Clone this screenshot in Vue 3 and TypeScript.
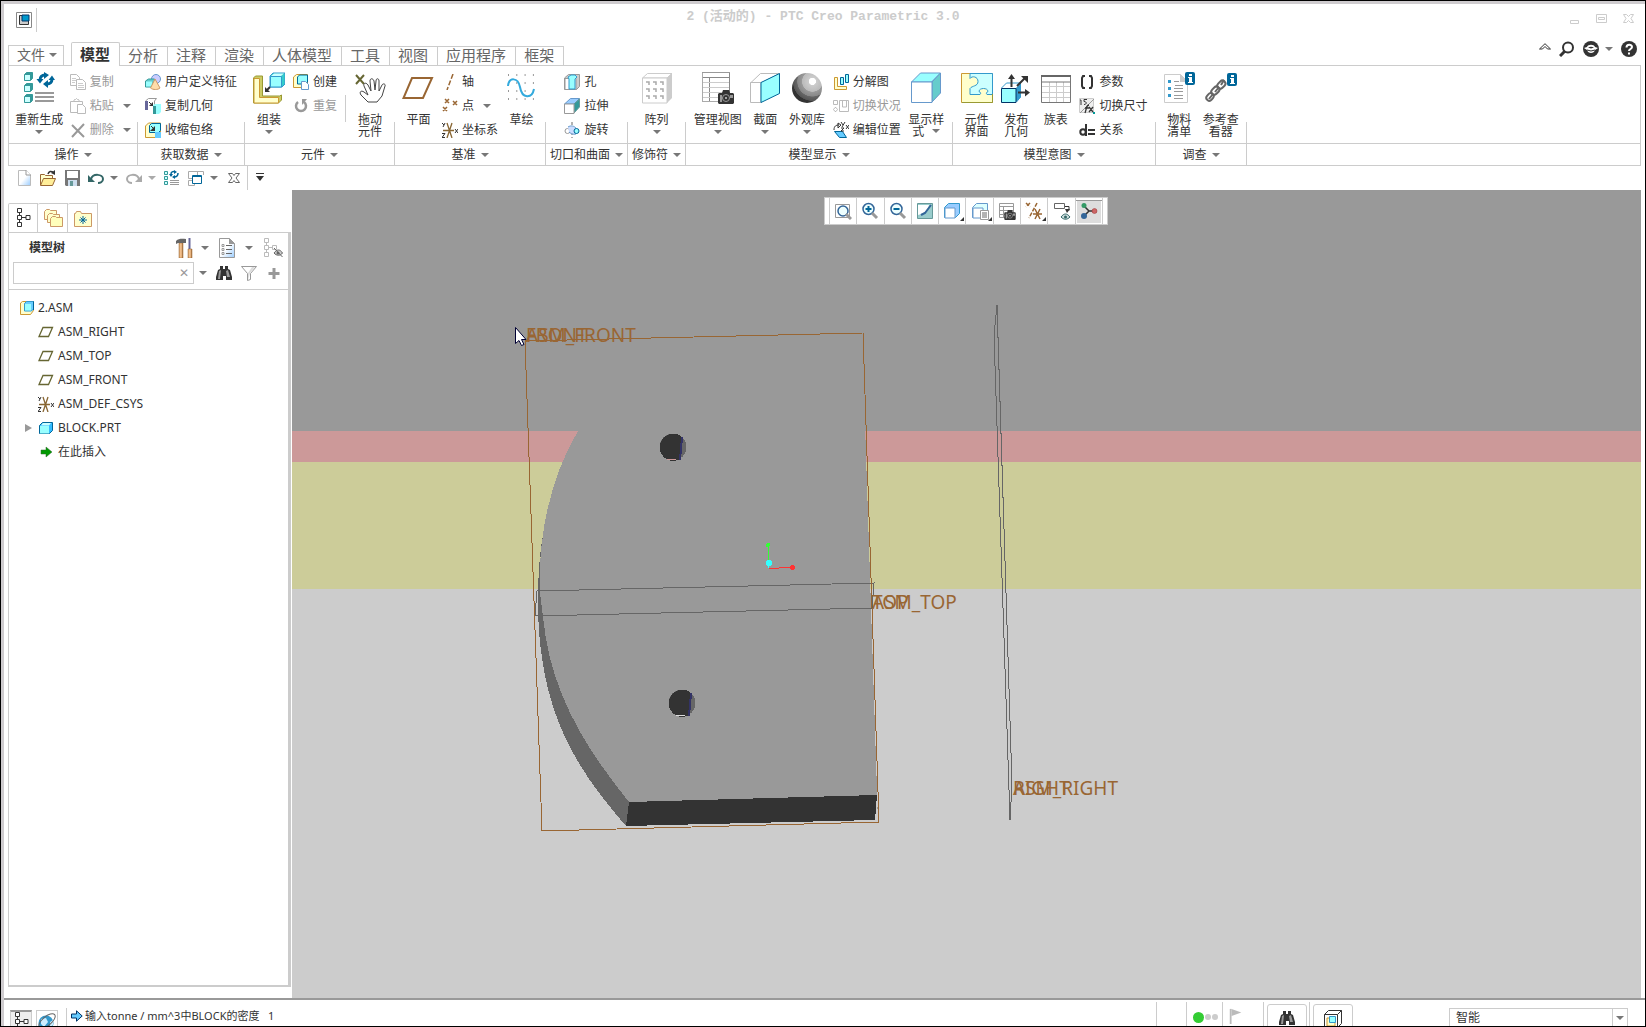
<script setup lang="ts">
import { ref } from 'vue'

interface Big { kind: 'big'; icon: string; lines: string[]; arrow?: boolean; inlineArrow?: boolean; wide?: boolean }
interface Small { icon: string; text: string; off?: boolean; arrow?: boolean }
interface Column { kind: 'col'; rows: Small[] }
interface Sep { kind: 'sep' }
interface Group { title: string; width: number; items: (Big | Column | Sep)[] }

const tabs = ['模型', '分析', '注释', '渲染', '人体模型', '工具', '视图', '应用程序', '框架']
const activeTab = ref('模型')
const filter = ref('')
const mode = ref('智能')

const big = (icon: string, lines: string[], opts: Partial<Big> = {}): Big => ({ kind: 'big', icon, lines, ...opts })
const col = (...rows: Small[]): Column => ({ kind: 'col', rows })

const groups: Group[] = [
  {
    title: '操作', width: 129, items: [
      big('regen', ['重新生成'], { arrow: true }),
      col({ icon: 'copy', text: '复制', off: true }, { icon: 'paste', text: '粘贴', off: true, arrow: true }, { icon: 'delete', text: '删除', off: true, arrow: true }),
    ],
  },
  {
    title: '获取数据', width: 107, items: [
      col({ icon: 'udf', text: '用户定义特征' }, { icon: 'copygeom', text: '复制几何' }, { icon: 'shrink', text: '收缩包络' }),
    ],
  },
  {
    title: '元件', width: 150, items: [
      big('assemble', ['组装'], { arrow: true }),
      col({ icon: 'create', text: '创建' }, { icon: 'repeat', text: '重复', off: true }),
      { kind: 'sep' },
      big('drag', ['拖动', '元件']),
    ],
  },
  {
    title: '基准', width: 151, items: [
      big('plane', ['平面']),
      col({ icon: 'axis', text: '轴' }, { icon: 'point', text: '点', arrow: true }, { icon: 'csys', text: '坐标系' }),
      big('sketch', ['草绘']),
    ],
  },
  {
    title: '切口和曲面', width: 82, items: [
      col({ icon: 'hole', text: '孔' }, { icon: 'extrude', text: '拉伸' }, { icon: 'revolve', text: '旋转' }),
    ],
  },
  { title: '修饰符', width: 58, items: [big('pattern', ['阵列'], { arrow: true })] },
  {
    title: '模型显示', width: 267, items: [
      big('viewmgr', ['管理视图'], { arrow: true }),
      big('section', ['截面'], { arrow: true }),
      big('sphere', ['外观库'], { arrow: true }),
      col({ icon: 'explode', text: '分解图' }, { icon: 'toggle', text: '切换状况', off: true }, { icon: 'editpos', text: '编辑位置' }),
      big('style', ['显示样', '式'], { inlineArrow: true }),
    ],
  },
  {
    title: '模型意图', width: 203, items: [
      big('puzzle', ['元件', '界面']),
      big('publish', ['发布', '几何']),
      big('table', ['族表']),
      col({ icon: 'param', text: '参数' }, { icon: 'dims', text: '切换尺寸' }, { icon: 'relation', text: '关系' }),
    ],
  },
  { title: '调查', width: 91, items: [big('bom', ['物料', '清单']), big('refs', ['参考查', '看器'])] },
]

const tree = [
  { icon: 't-plane', text: 'ASM_RIGHT' },
  { icon: 't-plane', text: 'ASM_TOP' },
  { icon: 't-plane', text: 'ASM_FRONT' },
  { icon: 'csys', text: 'ASM_DEF_CSYS' },
  { icon: 't-part', text: 'BLOCK.PRT', expand: true },
  { icon: 't-insert', text: '在此插入' },
]

const viewTools = ['v-refit', 'v-in', 'v-out', 'v-repaint', 'v-style', 'v-saved', 'v-mgr', 'v-datum', 'v-annot', 'v-spin']
const viewNames = ['重新调整', '放大', '缩小', '重画', '显示样式', '已保存方向', '视图管理器', '基准显示过滤器', '注释显示', '旋转中心']
</script>

<template>
  <div class="frame">
    <svg class="defs" aria-hidden="true">
      <defs>
        <radialGradient id="ball" cx="0.68" cy="0.28" r="0.8">
          <stop offset="0" stop-color="#fff" /><stop offset="0.14" stop-color="#fff" />
          <stop offset="0.16" stop-color="#ccc" /><stop offset="0.42" stop-color="#bbb" />
          <stop offset="0.44" stop-color="#999" /><stop offset="0.62" stop-color="#888" />
          <stop offset="0.64" stop-color="#666" /><stop offset="0.8" stop-color="#555" />
          <stop offset="0.82" stop-color="#333" /><stop offset="1" stop-color="#333" />
        </radialGradient>
        <linearGradient id="sheet" x1="0" y1="0" x2="1" y2="1">
          <stop offset="0.5" stop-color="#fff" /><stop offset="1" stop-color="#9cf" />
        </linearGradient>
        <linearGradient id="wood" x1="0" x2="1"><stop offset="0" stop-color="#c96" /><stop offset="0.5" stop-color="#fc9" /><stop offset="1" stop-color="#963" /></linearGradient>
      </defs>
      <symbol id="i-app" viewBox="0 0 16 16"><path d="M.5.5h15v15H.5z" fill="#fff" stroke="#888" /><path d="M3.500 3.500h9v9h-9z" fill="#ccc" stroke="#333" /><path d="M6 3h7v6H6z" fill="#09c" stroke="#036" /></symbol>

      <!-- large ribbon icons -->
      <symbol id="i-regen" viewBox="0 0 32 32">
        <path d="M1.500 2.500l2-2h6v6l-2 2h-6zM1.500 13.500l2-2h6v6l-2 2h-6zM1.500 24.500l2-2h6v6l-2 2h-6z" fill="#399" stroke="#399" />
        <path d="M2 3h5v5H2zM2 14h5v5H2zM2 25h5v5H2z" fill="#cff" />
        <path d="M12 21h19M12 25h19M12 29h19" stroke="#999" stroke-width="2" />
        <path d="M17 8c0-3 2-5 5-5M29 7c0 3-2 5-5 5" stroke="#069" stroke-width="3" fill="none" />
        <path d="M21 0l5 3-5 4zM13.500 7h7L17 11.500zM25 8v8l-5-4zM25.500 8H32l-3-4.500z" fill="#069" />
      </symbol>
      <symbol id="i-assemble" viewBox="0 0 32 32">
        <path d="M.5 6l2-2h7v20h17l2-1v5l-3 3H.5z" fill="#cc6" stroke="#993" /><path d="M1 6.500h5.500v19h19V31H1z" fill="#ffc" stroke="#c93" />
        <path d="M17 4l3-3h12v11l-3 3H17z" fill="#3cc" stroke="#39c" /><path d="M17.500 4.500h11V15h-11z" fill="#9ff" stroke="#39c" /><path d="M18 4l3-2.500h10L28 4z" fill="#cff" />
        <path d="M17 15l-4 4" stroke="#333" stroke-width="2" /><path d="M12 15v5h5z" fill="#333" />
      </symbol>
      <symbol id="i-drag" viewBox="0 0 32 32">
        <path d="M2 3l8 9M10 3l-8 9" stroke="#663" stroke-width="2" />
        <path d="M14 30L7 23c-2-3 0-5 3-3l4 3-4-9c-1-3 2-4 4-1l3 6-1-10c0-3 3-3 4 0l1 9 1-9c0-3 3-3 3 0v10l3-6c1-2 4-1 3 1l-3 10-5 6z" fill="#fff" stroke="#444" />
      </symbol>
      <symbol id="i-plane" viewBox="0 0 32 32"><path d="M10 6h20l-9 20H1.500z" fill="none" stroke="#963" stroke-width="2" /></symbol>
      <symbol id="i-sketch" viewBox="0 0 32 32">
        <path d="M3 3h26M3 11h26M3 19h26M3 27h26" stroke="#333" stroke-dasharray="1 7.300" />
        <path d="M3 14c1-9 10-9 12 1 2 12 12 12 14 2" fill="none" stroke="#3ad" stroke-width="2" />
      </symbol>
      <symbol id="i-pattern" viewBox="0 0 32 32">
        <path d="M1.500 6l5-4.500H31L26 6z" fill="#fff" stroke="#ccc" /><path d="M26 6l5-5v25l-5 5z" fill="#ccc" /><path d="M1.500 6H26v25H1.500z" fill="#fff" stroke="#ccc" />
        <path d="M5 10h3v3M12 10h3v3M19 10h3v3M5 17h3v3M12 17h3v3M19 17h3v3M5 24h3v3M12 24h3v3M19 24h3v3" fill="none" stroke="#aaa" stroke-width="1.500" />
      </symbol>
      <symbol id="i-camera" viewBox="0 0 16 14"><path d="M0 4l1-1h3l1-3h6l1 3h3l1 1v9l-1 1H1l-1-1z" fill="#333" /><path d="M2 5h2v7H2zM12 5h3v3h-3z" fill="#999" /><circle cx="8" cy="8" r="3.500" fill="#333" stroke="#999" /><circle cx="8" cy="8" r="1" fill="#ccc" /></symbol>
      <symbol id="i-viewmgr" viewBox="0 0 32 32">
        <path d="M.5.5h27v29H.5z" fill="#fff" stroke="#ccc" /><path d="M0 5.500h28M7.500 5v25M27.500 1v20" stroke="#888" /><path d="M1 10.500h26M1 15.500h26M1 20.500h26M1 25.500h17" stroke="#ccc" />
        <path d="M0 .5h28" stroke="#999" /><path d="M.5 1v29M0 29.500h18" stroke="#aaa" /><use href="#i-camera" x="16" y="18" width="16" height="14" />
      </symbol>
      <symbol id="i-section" viewBox="0 0 32 32"><path d="M1.500 11l10-9.500h19L12 11z" fill="#fff" stroke="#bbb" /><path d="M1.500 10.500H12v20H1.500z" fill="#fff" stroke="#bbb" /><path d="M12 10.500l18.500-9v20L12 30.500z" fill="#9ff" stroke="#069" /></symbol>
      <symbol id="i-sphere" viewBox="0 0 32 32"><circle cx="16" cy="16" r="15" fill="url(#ball)" /></symbol>
      <symbol id="i-style" viewBox="0 0 32 32"><path d="M1.500 10l9-9h20l-9 9z" fill="#9ff" stroke="#69c" /><path d="M22 10l8.500-9v20l-8.500 9z" fill="#6cc" stroke="#69c" /><path d="M1.500 10H22v20.500H1.500z" fill="#fff" stroke="#69c" /></symbol>
      <symbol id="i-puzzle" viewBox="0 0 32 32">
        <path d="M.5 1.500h31v29H.5z" fill="#ffc" stroke="#c93" /><path d="M9 1.500h22.500v21H26c-1-1-1-2 1-3 0-4-9-4-9 0 2 1 2 2 1 3H9v-6c2-3 8-2 8-7s-6-6-8-3z" fill="#cff" stroke="#39c" /><path d="M31.500 22v8.500H1" fill="none" stroke="#993" />
      </symbol>
      <symbol id="i-publish" viewBox="0 0 32 32">
        <path d="M1.500 16l5-5h14v14l-4 5" fill="#fff" stroke="#39c" /><path d="M16 16l5-5v14l-5 5z" fill="#39c" /><path d="M1.500 16.500H16v14H1.500z" fill="#9ff" stroke="#036" />
        <path d="M11.500 15V5M17 14l8-8M18 20.500h9" stroke="#333" stroke-width="2" /><path d="M8 7l3.500-5L15 7zM21 4h7v7zM25 17l5 3.500-5 4z" fill="#333" />
      </symbol>
      <symbol id="i-table" viewBox="0 0 32 32"><path d="M2 4.500h28v26H2z" fill="#fff" /><path d="M2 14.500h28M2 20.500h28M2 25.500h28M9.500 10v20M16.500 10v20M23.500 10v20" stroke="#ccc" stroke-width="1" /><path d="M1.500 4v26.500h29V4M2 10h28" stroke="#777" fill="none" /><path d="M1 4h30" stroke="#666" stroke-width="2" /></symbol>
      <symbol id="i-info" viewBox="0 0 10 13"><rect width="10" height="13" rx="2" fill="#069" /><path d="M4 2h3v2H4zM3 5h4v5h1v1H3v-1h1V6H3z" fill="#fff" /></symbol>
      <symbol id="i-bom" viewBox="0 0 32 32">
        <path d="M1.500 2.500h16l7 7v21h-23z" fill="#fff" stroke="#ccc" /><path d="M17 2v8h8z" fill="#ccc" /><path d="M5 8h3v3H5zM5 15h3v3H5zM5 22h3v3H5z" fill="#39c" />
        <path d="M11 9.500h5M11 16.500h9M11 19.500h9M11 23.500h9M11 26.500h9M12 13.500h8" stroke="#999" /><use href="#i-info" x="22" y="0" width="10" height="13" />
      </symbol>
      <symbol id="i-refs" viewBox="0 0 32 32">
        <g fill="none" stroke="#666" stroke-width="2"><rect x="1" y="22" width="8" height="6" rx="3" transform="rotate(-50 5 25)" /><rect x="6" y="16" width="9" height="6" rx="3" transform="rotate(-45 10 19)" /><rect x="12" y="10" width="9" height="6" rx="3" transform="rotate(-45 16 13)" /><path d="M4 27l4-5M10 20l4-5M16 13l3-5" /></g>
        <use href="#i-info" x="22" y="1" width="10" height="13" />
      </symbol>

      <!-- small ribbon icons -->
      <symbol id="i-copy" viewBox="0 0 16 16"><path d="M.5.5h6l3 3v8h-9z" fill="#fff" stroke="#bbb" /><path d="M6.500 5.500h6l3 3v7h-9z" fill="#fff" stroke="#bbb" /><path d="M2 4.500h4M2 6.500h4M2 8.500h3M8 9.500h5M8 11.500h6M8 13.500h6" stroke="#ccc" /></symbol>
      <symbol id="i-paste" viewBox="0 0 16 16"><path d="M.5 3.500h12v11H.5z" fill="#fff" stroke="#bbb" /><path d="M3.500 3.500l1-2h1l1-1 1 1h1l1 2z" fill="#fff" stroke="#bbb" /><path d="M7.500 6.500h5l3 3v6h-8z" fill="#fff" stroke="#bbb" /></symbol>
      <symbol id="i-delete" viewBox="0 0 16 16"><path d="M2 3l12 12M14 2L2 15" stroke="#999" stroke-width="2" /></symbol>
      <symbol id="i-udf" viewBox="0 0 16 16"><circle cx="11" cy="5" r="4.500" fill="#ccf" stroke="#69c" /><path d="M.5 7l3-2h6v6l-2 2h-7z" fill="#6cc" stroke="#399" /><path d="M1 7.500h6v5H1z" fill="#9ff" /><path d="M5.500 14L10 5l5 9c-2 2-7 2-9.500 0z" fill="#fda" stroke="#c96" /></symbol>
      <symbol id="i-copygeom" viewBox="0 0 16 16"><path d="M.5 12V3l3-2.500h8l-2 2.500v6" fill="#fff" stroke="#999" /><path d="M0 3h3v9H0z" fill="#669" /><path d="M8 7l2-1h6v8l-2 2H8z" fill="#9ff" /><path d="M8 8h3v8H8z" fill="#399" /><path d="M4 4l3 3" stroke="#333" /><path d="M8 4v4H4z" fill="#333" /></symbol>
      <symbol id="i-shrink" viewBox="0 0 16 16"><path d="M.5 4l3-3h12v12l-4 2.500H.5z" fill="#ffc" stroke="#c93" /><path d="M4.500 3.500l2-2h9v7l-2 2h-9z" fill="#9ff" stroke="#069" /><path d="M10 10h6v6h-6z" fill="#6cf" /><path d="M6 4l3 3" stroke="#333" /><path d="M10 4v5H5z" fill="#333" /></symbol>
      <symbol id="i-create" viewBox="0 0 16 16"><path d="M.5 3l3-2.500h11v10l-3 3H.5z" fill="#ffc" stroke="#cc9933" /><path d="M4.500 3l2-2h8v7l-2 2h-8z" fill="#9ff" stroke="#069" /><path d="M8.500 7.500h4l3 3v5h-7z" fill="#fff" stroke="#69c" /></symbol>
      <symbol id="i-repeat" viewBox="0 0 16 16"><path d="M5 4a5 5 0 1 0 6 0" fill="none" stroke="#999" stroke-width="2.500" /><path d="M9 1h5L9 7z" fill="#999" /></symbol>
      <symbol id="i-axis" viewBox="0 0 16 16"><path d="M11 0L5 16" stroke="#963" stroke-width="1.500" stroke-dasharray="5 2" /></symbol>
      <symbol id="i-point" viewBox="0 0 16 16"><path d="M3 1l4 4M7 1L3 5M11 3l4 4M15 3l-4 4M1 9l4 4M5 9l-4 4" stroke="#963" stroke-width="1.500" /></symbol>
      <symbol id="i-csys" viewBox="0 0 16 16"><path d="M1 8.500h11M5 1l5 15M10 1L5 16" stroke="#863" stroke-width="1.300" /><path d="M0 1l2 2M3 1L1 5M0 11.500h3l-3 4h3M13 7l3 4M16 7l-3 4" stroke="#333" fill="none" /></symbol>
      <symbol id="i-hole" viewBox="0 0 16 16"><path d="M.5 4l4-3.500h11v12l-3 3H.5z" fill="#ccc" stroke="#999" /><path d="M1 4.500h11v11H1z" fill="#fff" stroke="#999" /><path d="M4 3l3-2h4l2 2-2 2v10H5V5z" fill="#9ff" stroke="#39c" /></symbol>
      <symbol id="i-extrude" viewBox="0 0 16 16"><path d="M.5 6l6-5.500h9L10 6z" fill="#9cf" stroke="#69c" /><path d="M10 6l5.500-5v8L10 15z" fill="#399" stroke="#699" /><path d="M.5 6H10v9.500H.5z" fill="#fff" stroke="#999" /></symbol>
      <symbol id="i-revolve" viewBox="0 0 16 16"><path d="M8 0v16" stroke="#666" stroke-dasharray="3 2" /><circle cx="3.500" cy="9" r="2.500" fill="#fff" stroke="#999" /><path d="M4 5c3-2 6-1 8 1v6c-3 1-6-1-7-2" fill="#cdf" stroke="#69c" /><circle cx="12.500" cy="9" r="2.500" fill="#9ff" stroke="#069" /></symbol>
      <symbol id="i-explode" viewBox="0 0 16 16"><path d="M1.500 3.500h3v9h9v3h-12z" fill="#ffc" stroke="#c93" /><path d="M7.500 3.500h3v7h-3zM12.500.5h3v8h-3z" fill="#9ff" stroke="#069" /></symbol>
      <symbol id="i-toggle" viewBox="0 0 16 16"><path d="M.5 2.500h4v4h-4zM2 9.500h1l1.500 2-1.500 2H2l-1.500-2zM6.500 2.500h9v11h-9zM9.500 3v6h4V3" fill="#fff" stroke="#bbb" /></symbol>
      <symbol id="i-editpos" viewBox="0 0 16 16"><path d="M1.500 9.500h8l4 6h-7z" fill="#6cf" stroke="#069" /><path d="M1 8c0-4 2-5 5-5" stroke="#333" fill="none" /><path d="M5 1l3 2-3 3zM8 0l2 3M12 0l-3 5M8 6h3l-3 3h3M13 3l3 4M16 3l-3 4" stroke="#333" fill="none" /></symbol>
      <symbol id="i-param" viewBox="0 0 16 16"><path d="M6 2H4L3 4v8l1 2h2M10 2h2l1 2v8l-1 2h-2" fill="none" stroke="#333" stroke-width="2" /></symbol>
      <symbol id="i-dims" viewBox="0 0 16 16"><path d="M.5.5h14v14H.5z" fill="#eee" stroke="#ccc" /><path d="M1 15L15 1" stroke="#999" /><path d="M1 2h1v5M8 1.500H5v2c3 0 3 3 0 3" fill="none" stroke="#333" /><path d="M10 7c-3 0-2 3-4 8M6 10h4M10 9l4 5M14 9l-4 5" fill="none" stroke="#333" stroke-width="1.300" /><path d="M14 14h2v2h-2z" fill="#099" /></symbol>
      <symbol id="i-relation" viewBox="0 0 16 16"><circle cx="4" cy="10" r="2.700" fill="none" stroke="#333" stroke-width="2" /><path d="M7 2v12M9 8h7M9 12h7" stroke="#333" stroke-width="2" /></symbol>

      <!-- quick access and panel icons -->
      <symbol id="i-new" viewBox="0 0 16 16"><path d="M2.500.5h8l4 4v11h-12z" fill="url(#sheet)" stroke="#bbb" /><path d="M10 0v5h5" fill="#fff" stroke="#999" /></symbol>
      <symbol id="i-open" viewBox="0 0 16 16"><path d="M.5 15V4.500h4l1 1h7V8" fill="#ffc" stroke="#963" /><path d="M.5 15.500l3-7h12l-3 7z" fill="#fe9" stroke="#963" /><path d="M8 4c1-3 3-3 5-2" fill="none" stroke="#333" stroke-width="1.500" /><path d="M15 0v5l-4-2z" fill="#333" /></symbol>
      <symbol id="i-save" viewBox="0 0 16 16"><path d="M1 0h15v16H2l-1-1z" fill="#777" /><path d="M3 1h11v7H3z" fill="#fff" /><path d="M4 10h9v6H4z" fill="#cde" /><path d="M6 11h3v5H6z" fill="#699" /></symbol>
      <symbol id="i-undo" viewBox="0 0 16 16"><path d="M3 9c2-6 12-5 12 0 0 3-3 4-5 4" fill="none" stroke="#366" stroke-width="2" /><path d="M0 5v7h7z" fill="#366" /></symbol>
      <symbol id="i-redo" viewBox="0 0 16 16"><path d="M13 9C11 3 1 4 1 9c0 3 3 4 5 4" fill="none" stroke="#aaa" stroke-width="2" /><path d="M16 5v7H9z" fill="#aaa" /></symbol>
      <symbol id="i-regen2" viewBox="0 0 16 16"><path d="M.5 1.500h3v3h-3zM.5 6.500h3v3h-3zM.5 11.500h3v3h-3z" fill="#cff" stroke="#399" /><path d="M6 10.500h9M6 12.500h9M6 14.500h9" stroke="#999" /><path d="M7 4c0-2 2-3 4-2M14 3c0 3-2 4-4 4" fill="none" stroke="#069" stroke-width="1.500" /><path d="M10 0l3 2-3 2zM5 4h4L7 7zM11 5v4L8 7z" fill="#069" /></symbol>
      <symbol id="i-windows" viewBox="0 0 16 16"><path d="M.5 1.500h9v7h-9zM.5 10.500h6v5h-6z" fill="#fff" stroke="#aaa" /><path d="M9 1.500h6.500V5" fill="none" stroke="#aaa" /><path d="M4.500 5.500h9v8h-9z" fill="#fff" stroke="#069" /><path d="M5 6.500h9" stroke="#069" /></symbol>
      <symbol id="i-closewin" viewBox="0 0 16 16"><path d="M2.500 3.500h4L8 5.500l1.500-2h4L10 8l3.500 4.500h-4L8 10.500l-1.500 2h-4L6 8z" fill="#fff" stroke="#666" /></symbol>
      <symbol id="i-nodes" viewBox="0 0 16 20"><path d="M2.500.5h4v4h-4zM2.500 7.500h4v4h-4zM2.500 14.500h4v4h-4zM11 7.500h4v4h-4zM4.500 5v3M4.500 12v3M7 9.500h4" fill="#fff" stroke="#333" /></symbol>
      <symbol id="i-folders" viewBox="0 0 20 20"><path d="M1.500 3.500l2-2h3l1 1h6v9h-12z" fill="#ffc" stroke="#c96" /><path d="M4.500 7.500l2-2h3l1 1h6v8h-12z" fill="#ffc" stroke="#c96" /><path d="M7.500 10.500l2-2h3l1 1h6v9h-12z" fill="#ffb" stroke="#c96" /></symbol>
      <symbol id="i-favorites" viewBox="0 0 20 20"><path d="M1.500 5.500h1l1-2h4l1 2h10v13h-17z" fill="#ffc" stroke="#c96" /><path d="M10 8v8M6 12h8M7.500 9.500l5 5M12.500 9.500l-5 5" stroke="#069" /></symbol>
      <symbol id="i-tools" viewBox="0 0 20 20"><path d="M4 5h4v15H4z" fill="url(#wood)" stroke="#963" stroke-width=".5" /><path d="M1 3c3-3 7-2 10-2v4H3L1 6z" fill="#666" /><path d="M13.500 0h2v11h-2z" fill="#669" /><path d="M13 11h4v9h-4z" fill="url(#wood)" stroke="#963" stroke-width=".5" /></symbol>
      <symbol id="i-list" viewBox="2 0 20 20"><path d="M2.500.5h10l5 5v14h-15z" fill="url(#sheet)" stroke="#999" /><path d="M12 0v6h6z" fill="#999" /><path d="M9 7.500h6M9 11.500h6M9 15.500h6" stroke="#666" /><path d="M5 6.500h2v2H5zM5 10.500h2v2H5zM5 14.500h2v2H5z" fill="#fff" stroke="#999" /></symbol>
      <symbol id="i-treeeye" viewBox="0 0 20 20"><path d="M1.500.5h4v4h-4zM1.500 7.500h4v4h-4zM1.500 14.500h4v4h-4zM9.500 7.500h4v4h-4zM3.500 5v3M3.500 12v3M6 9.500h4" fill="#fff" stroke="#bbb" /><path d="M11 15c3-4 6-4 8.500 0-2 3-6 3-8.500 0z" fill="#ccc" stroke="#666" /><circle cx="15" cy="15" r="1.500" fill="#666" /><path d="M11 10l8.500 9" stroke="#666" /></symbol>
      <symbol id="i-binoc" viewBox="0 0 16 16"><path d="M4 1h3v3h2V1h3v3l2 1 2 7v3h-6v-4H7v4H0v-3l2-7 2-1z" fill="#333" /><path d="M3 6l2-1-1 9H2zM10 6l2-1 2 7h-3z" fill="#999" /></symbol>
      <symbol id="i-funnel" viewBox="0 0 16 16"><path d="M.5 1.500h15l-6 7v6l-3 1v-7z" fill="#fff" stroke="#999" /><path d="M9 8l5-6h-3l-4 6v7" fill="#ddd" /></symbol>
      <symbol id="i-plus" viewBox="0 0 16 16"><path d="M8 3v11M2.500 8.500h11" stroke="#999" stroke-width="3" /></symbol>
      <symbol id="i-t-asm" viewBox="0 0 16 16"><path d="M1.500 3l2-1.500h11v9l-3 4h-10z" fill="#ffc" stroke="#c93" /><path d="M5.500 3.500l2-2h7V9l-2 2h-7z" fill="#6cf" stroke="#39c" /><path d="M6 4h6v6.500H6z" fill="#9ff" /><path d="M14.500 1.500V10" stroke="#069" /></symbol>
      <symbol id="i-t-plane" viewBox="0 0 16 16"><path d="M5 3.500h9.500l-4 9H1z" fill="#fff" stroke="#663" stroke-width="1.300" /></symbol>
      <symbol id="i-t-part" viewBox="0 0 16 16"><path d="M1.500 5.500l3-3h10v8l-3 3h-10z" fill="#3bf" stroke="#069" /><path d="M2 6h9v7.500H2z" fill="#9ff" /><path d="M3 5.500L5 3h8l-2 2.500z" fill="#cff" /></symbol>
      <symbol id="i-t-insert" viewBox="0 0 16 16"><path d="M3 6h5V3l6 5-6 5v-3H3z" fill="#090" stroke="#363" stroke-width=".5" /></symbol>

      <!-- in-graphics toolbar icons -->
      <symbol id="i-v-refit" viewBox="0 0 18 18"><path d="M1.500 2.500h14v13h-14z" fill="#fff" stroke="#999" /><circle cx="9" cy="9" r="5" fill="#eff" stroke="#369" stroke-width="1.500" /><path d="M12 12l5 5" stroke="#999" stroke-width="3" /></symbol>
      <symbol id="i-v-in" viewBox="0 0 18 18"><circle cx="7.500" cy="7" r="5.500" fill="#eff" stroke="#369" stroke-width="1.500" /><path d="M11 11l5 5" stroke="#999" stroke-width="3" /><path d="M4.500 7h6M7.500 4v6" stroke="#069" stroke-width="2" /></symbol>
      <symbol id="i-v-out" viewBox="0 0 18 18"><circle cx="7.500" cy="7" r="5.500" fill="#eff" stroke="#369" stroke-width="1.500" /><path d="M11 11l5 5" stroke="#999" stroke-width="3" /><path d="M4.500 7h6" stroke="#069" stroke-width="2" /></symbol>
      <symbol id="i-v-repaint" viewBox="0 0 18 18"><path d="M1.500 1.500h15v15h-15z" fill="#9cc" stroke="#699" /><path d="M2 3h11c-1 5-4 8-11 10z" fill="#fff" /><path d="M15 3L9 11l-4 2" fill="none" stroke="#369" stroke-width="2" /></symbol>
      <symbol id="i-v-style" viewBox="0 0 18 18"><path d="M1.500 5.500l4-4h11v10l-4 4h-11z" fill="#9cf" stroke="#39c" /><path d="M2 6h10v10H2z" fill="#fff" stroke="#69c" /></symbol>
      <symbol id="i-v-saved" viewBox="0 0 18 18"><path d="M1.500 5.500l4-4h11v10l-4 4h-11z" fill="#dff" stroke="#69c" /><path d="M2 6h10v10H2z" fill="#fff" stroke="#69c" /><path d="M9.500 8.500h8v9h-8z" fill="#fff" stroke="#999" /><path d="M11 11h5M11 13h5M11 15h5" stroke="#666" /></symbol>
      <symbol id="i-v-mgr" viewBox="0 0 18 18"><path d="M1.500 1.500h14v14h-14zM1 4.500h15M1 8.500h15M1 12.500h15M5.500 4v12" fill="#fff" stroke="#999" /><use href="#i-camera" x="6" y="8" width="12" height="10" /></symbol>
      <symbol id="i-v-datum" viewBox="0 0 18 18"><path d="M1 1l4 4M5 1L1 5M12 1L4 16" stroke="#963" stroke-width="1.500" stroke-dasharray="4 1.500" /><path d="M8 12h9M10 7l5 10M15 7l-5 10" stroke="#963" stroke-width="1.500" /></symbol>
      <symbol id="i-v-annot" viewBox="0 0 18 18"><path d="M1.500 1.500h10v5h-10z" fill="#fff" stroke="#666" /><path d="M12 4.500h4v4" fill="none" stroke="#333" /><path d="M12 7h5l-3 4z" fill="#333" /><path d="M8 15c3-4 6-4 9 0-3 3-6 3-9 0z" fill="#cdd" stroke="#366" /><circle cx="12.500" cy="15" r="1.500" fill="#366" /></symbol>
      <symbol id="i-v-spin" viewBox="0 0 18 18"><path d="M4 4l5 5-5 5M9 9h6" fill="none" stroke="#333" stroke-width="1.500" /><circle cx="4" cy="3.500" r="2.500" fill="#396" /><circle cx="4" cy="14" r="3" fill="#369" /><circle cx="14.500" cy="9" r="2.500" fill="#c66" stroke="#933" stroke-width=".5" /></symbol>

      <symbol id="i-find" viewBox="0 0 16 16"><circle cx="9" cy="6.500" r="5" fill="none" stroke="#333" stroke-width="2" /><path d="M6 10l-5 5" stroke="#333" stroke-width="3" /></symbol>
      <symbol id="i-learn" viewBox="0 0 16 16"><circle cx="8" cy="8" r="8" fill="#333" /><path d="M1 7l3-1c1-3 7-3 8 0l3 1-3 2c-1 4-7 4-8 0z" fill="#fff" /><path d="M5 6.500c2-1 4-1 6 0L8 7.500z" fill="#333" /><path d="M4 9l4 1 4-1" fill="none" stroke="#333" /></symbol>
      <symbol id="i-help" viewBox="0 0 16 16"><circle cx="8" cy="8" r="8" fill="#333" /><path d="M5.500 6.500C5.500 3 11 3 11 6c0 2-3 2-3 4" fill="none" stroke="#fff" stroke-width="2" /><path d="M7 11.500h2v2H7z" fill="#fff" /></symbol>
      <symbol id="i-collapse" viewBox="2 2 12 12"><path d="M2.500 8L8 2.700 13.500 8h-3L8 5.500 5.500 8z" fill="#fff" stroke="#333" /></symbol>
      <symbol id="i-min" viewBox="0 0 12 12"><path d="M1.500 7.500h8v3h-8z" fill="#fff" stroke="#ccc" /></symbol>
      <symbol id="i-max" viewBox="0 0 12 12"><path d="M.5 1.500h10v8H.5zM2.500 4.500h6v2h-6z" fill="#fff" stroke="#ccc" /></symbol>
      <symbol id="i-close" viewBox="0 0 12 12"><path d="M.5 1.500h3l2 2 2-2h3L8 5.500l2.500 4h-3l-2-2-2 2h-3L3 5.500z" fill="#fff" stroke="#ccc" /></symbol>
      <symbol id="i-globe" viewBox="0 0 18 18"><circle cx="8" cy="11" r="7.500" fill="#39c" /><path d="M3 7l5-1 2 4-4 5-3-3zM12 10l3-2v5l-3 3z" fill="#cef" /><ellipse cx="9" cy="9" rx="10" ry="4.500" transform="rotate(-40 9 9)" fill="none" stroke="#666" /></symbol>
      <symbol id="i-msg" viewBox="0 0 12 12"><path d="M.5 4h5V.8L11.200 6l-5.700 5.200V8h-5z" fill="#6cf" stroke="#036" /></symbol>
      <symbol id="i-flag" viewBox="0 0 16 18"><path d="M2 1v17" stroke="#bbb" stroke-width="2" /><path d="M3 1l11 4L3 9z" fill="#bbb" /></symbol>
      <symbol id="i-filterbox" viewBox="0 0 18 18"><path d="M.5 4.500l4-4h13v13l-4 4H.5zM.5 4.500h13v13M13.500 4.500l4-4" fill="#fff" stroke="#333" /><path d="M3 8h8v8H3z" fill="#ffc" stroke="#c93" /><path d="M5.500 6.500h6v6h-6z" fill="#9ff" stroke="#39c" /></symbol>
    </svg>

    <header class="titlebar">
      <svg class="ic16"><use href="#i-app" /></svg>
      <span class="vline"></span>
      <h1>2 (活动的) - PTC Creo Parametric 3.0</h1>
      <div class="wincontrols">
        <button aria-label="最小化"><svg class="ic12"><use href="#i-min" /></svg></button>
        <button aria-label="最大化"><svg class="ic12"><use href="#i-max" /></svg></button>
        <button aria-label="关闭"><svg class="ic12"><use href="#i-close" /></svg></button>
      </div>
    </header>

    <nav class="tabrow">
      <button class="filetab">文件<i class="tri"></i></button>
      <div class="tabs">
        <button v-for="t in tabs" :key="t" :class="{ active: t === activeTab }" @click="activeTab = t">{{ t }}</button>
      </div>
      <div class="helpers">
        <button aria-label="收起功能区"><svg class="ic12"><use href="#i-collapse" /></svg></button>
        <button aria-label="搜索"><svg class="ic16"><use href="#i-find" /></svg></button>
        <button aria-label="学习"><svg class="ic16"><use href="#i-learn" /></svg><i class="tri"></i></button>
        <button aria-label="帮助"><svg class="ic16"><use href="#i-help" /></svg></button>
      </div>
    </nav>

    <section class="ribbon">
      <div v-for="g in groups" :key="g.title" class="group" :style="{ width: g.width + 'px' }">
        <div class="body">
          <template v-for="(it, n) in g.items" :key="n">
            <button v-if="it.kind === 'big'" class="big">
              <svg class="ic32"><use :href="'#i-' + it.icon" /></svg>
              <span v-for="(l, k) in it.lines" :key="l" class="line">{{ l }}<i v-if="it.inlineArrow && k === 1" class="tri"></i></span>
              <i v-if="it.arrow" class="tri below"></i>
            </button>
            <div v-else-if="it.kind === 'col'" class="col">
              <button v-for="r in it.rows" :key="r.text" class="small" :disabled="r.off">
                <svg class="ic16"><use :href="'#i-' + r.icon" /></svg><span>{{ r.text }}</span><i v-if="r.arrow" class="tri"></i>
              </button>
            </div>
            <span v-else class="sep"></span>
          </template>
        </div>
        <button class="grouptitle">{{ g.title }}<i class="tri"></i></button>
      </div>
      <div class="group rest"><div class="body"></div><div class="grouptitle"></div></div>
    </section>

    <div class="quick">
      <button aria-label="新建"><svg class="ic16"><use href="#i-new" /></svg></button>
      <button aria-label="打开"><svg class="ic16"><use href="#i-open" /></svg></button>
      <button aria-label="保存"><svg class="ic16"><use href="#i-save" /></svg></button>
      <button aria-label="撤消"><svg class="ic16"><use href="#i-undo" /></svg><i class="tri"></i></button>
      <button aria-label="重做"><svg class="ic16"><use href="#i-redo" /></svg><i class="tri pale"></i></button>
      <button aria-label="重新生成"><svg class="ic16"><use href="#i-regen2" /></svg></button>
      <button aria-label="窗口"><svg class="ic16"><use href="#i-windows" /></svg><i class="tri"></i></button>
      <button aria-label="关闭窗口"><svg class="ic16"><use href="#i-closewin" /></svg></button>
      <button class="customize" aria-label="自定义"><i class="tri dark"></i></button>
    </div>

    <main class="work">
      <aside class="side">
        <div class="sidetabs">
          <button class="on" aria-label="模型树"><svg class="nodes"><use href="#i-nodes" /></svg></button>
          <button aria-label="文件夹浏览器"><svg class="ic20"><use href="#i-folders" /></svg></button>
          <button aria-label="收藏夹"><svg class="ic20"><use href="#i-favorites" /></svg></button>
        </div>
        <div class="panel">
          <div class="panelhead">
            <h2>模型树</h2>
            <button aria-label="设置"><svg class="ic20"><use href="#i-tools" /></svg><i class="tri"></i></button>
            <button aria-label="显示"><svg class="ic20"><use href="#i-list" /></svg><i class="tri"></i></button>
            <button aria-label="隐藏项"><svg class="ic20"><use href="#i-treeeye" /></svg></button>
          </div>
          <div class="search">
            <div class="field">
              <input v-model="filter" type="text" aria-label="搜索模型树" />
              <button aria-label="清除" @click="filter = ''">✕</button>
            </div>
            <i class="tri"></i>
            <button aria-label="查找"><svg class="ic16"><use href="#i-binoc" /></svg></button>
            <button aria-label="过滤"><svg class="ic16"><use href="#i-funnel" /></svg></button>
            <button aria-label="添加"><svg class="ic16"><use href="#i-plus" /></svg></button>
          </div>
          <ul class="tree">
            <li class="root"><svg class="ic16"><use href="#i-t-asm" /></svg><span>2.ASM</span></li>
            <li v-for="node in tree" :key="node.text">
              <span class="twist"><i v-if="node.expand"></i></span>
              <svg class="ic16"><use :href="'#i-' + node.icon" /></svg><span>{{ node.text }}</span>
            </li>
          </ul>
        </div>
      </aside>

      <section class="view">
        <svg class="scene" role="img" aria-label="BLOCK 模型">
          <g transform="translate(-292 -190)" shape-rendering="crispEdges">
            <path d="M862 333L878 822 877 796 629 802C604 771 580 738 567 710C552 675 541 640 540 600C537 540 549 480 578 431V400L600 350z" fill="#999" />
            <path d="M543 535C538 570 539 590 543 617C550 690 583 745 629 802L626 826C588 782 553 735 542 658C536 622 537 565 543 535z" fill="#666" />
            <path d="M629 802L877 795 875 820 626 826z" fill="#333" />
            <g id="holes">
              <circle cx="673" cy="447" r="13.500" fill="#666" /><path d="M682 437A13.500 13.500 0 1 0 680 459z" fill="#333" /><path d="M682 437l-2 23" stroke="#336" stroke-width="2" /><path d="M667 459.500h9" stroke="#c99" />
              <circle cx="682" cy="703" r="13.500" fill="#666" /><path d="M691 693A13.500 13.500 0 1 0 689 715z" fill="#333" /><path d="M691 693l-2 23" stroke="#336" stroke-width="2" /><path d="M676 715.500h9" stroke="#ddd" />
            </g>
            <g fill="none" stroke="#666">
              <path d="M537 591L874 583 872 608 535 616z" /><path d="M997 305L1012 785 1010 820 994 335z" />
            </g>
            <path d="M525 341L863 333 879 822 542 831z" fill="none" stroke="#963" />
            <path d="M768.500 546v17" stroke="#3f3" /><circle cx="768" cy="545" r="2" fill="#3f3" />
            <path d="M769 568.500l10-.5 13-.5" stroke="#f33" fill="none" /><circle cx="792.500" cy="567.500" r="2.500" fill="#f33" />
            <path d="M768.500 563v5" stroke="#3ff" /><circle cx="769" cy="563" r="3" fill="#3ff" />
          </g>
          <g class="names" transform="translate(-292 -190)">
            <text x="526" y="342">FRONT</text><text x="526" y="342">ASM_FRONT</text>
            <text x="872" y="609">TOP</text><text x="872" y="609">ASM_TOP</text>
            <text x="1013" y="795">RIGHT</text><text x="1013" y="795">ASM_RIGHT</text>
          </g>
          <path transform="translate(223 137)" d="M.5.5v16l3.500-3 2.500 5 2.500-1-2.500-5H11z" fill="#fff" stroke="#003" />
        </svg>
        <div class="viewtools">
          <button v-for="(t, i) in viewTools" :key="t" :aria-label="viewNames[i]" :class="{ pressed: t === 'v-spin', more: ['v-style', 'v-saved', 'v-datum'].includes(t) }">
            <svg class="ic18"><use :href="'#i-' + t" /></svg>
          </button>
        </div>
      </section>
    </main>

    <footer class="status">
      <button class="sq pressed" aria-label="模型树"><svg class="nodes"><use href="#i-nodes" /></svg></button>
      <button class="sq" aria-label="浏览器"><svg class="ic18"><use href="#i-globe" /></svg></button>
      <p><svg class="ic12"><use href="#i-msg" /></svg>输入tonne / mm^3中BLOCK的密度&nbsp;&nbsp; 1</p>
      <span class="cell blank"></span>
      <span class="cell lights"><b></b><i></i><i></i></span>
      <span class="cell flag"><svg class="ic16"><use href="#i-flag" /></svg></span>
      <span class="cell btn"><button aria-label="查找"><svg class="ic16"><use href="#i-binoc" /></svg></button></span>
      <span class="cell btn"><button aria-label="选择过滤框"><svg class="ic18"><use href="#i-filterbox" /></svg></button></span>
      <div class="picker">
        <select v-model="mode" aria-label="选择过滤器"><option>智能</option></select>
        <i class="tri"></i>
      </div>
    </footer>
  </div>
</template>

<style>
body { margin: 0; background: #fff; }
</style>

<style scoped>
* { box-sizing: border-box; }
.frame {
  display: flex;
  flex-direction: column;
  height: 100vh;
  border: 1px solid #000;
  box-shadow: inset 3px 3px 0 #cfcccf;
  padding: 3px 0 0 3px;
  background: #fff;
  color: #333;
  font: 12px/16px "Noto Sans", "Noto Sans CJK SC", sans-serif;
  overflow: hidden;
}
.defs { position: absolute; width: 0; height: 0; }
button { display: flex; align-items: center; margin: 0; padding: 0; border: 0; background: none; color: inherit; font: inherit; }
svg { flex: none; display: block; }
.ic12 { width: 12px; height: 12px; }
.ic16 { width: 16px; height: 16px; }
.ic18 { width: 18px; height: 18px; }
.ic20 { width: 20px; height: 20px; }
.ic32 { width: 32px; height: 32px; }
.nodes { width: 16px; height: 20px; }
.tri { flex: none; display: inline-block; width: 0; height: 0; border: 4px solid transparent; border-top-color: #777; border-bottom: 0; }
.tri.pale { border-top-color: #aaa; }

.titlebar { flex: none; display: flex; height: 34px; padding: 4px 6px 0 12px; gap: 4px; }
.titlebar > svg { margin-top: 4px; }
.vline { width: 1px; height: 24px; background: #ccc; }
h1 { flex: 1; margin: 0; padding-left: 40px; text-align: center; color: #ccc; font: bold 13px/18px "Liberation Mono", "Noto Sans CJK SC", monospace; }
.wincontrols { display: flex; gap: 15px; padding: 4px 4px 0 0; height: 18px; }

.tabrow { flex: none; display: flex; align-items: flex-end; height: 28px; margin: 0 4px -1px; position: relative; z-index: 1; }
.filetab { height: 20px; width: 56px; margin: 0 7px 1px 0; padding: 0 0 2px 8px; gap: 4px; border: 1px solid #ccc; border-bottom: 0; color: #666; font-size: 14px; }
.tabs { display: flex; align-items: flex-end; color: #666; font-size: 15px; line-height: 16px; }
.tabs button { height: 19px; margin-bottom: 1px; padding: 0 9px 2px 8px; border-top: 1px solid #ccc; border-right: 1px solid #ccc; }
.tabs .active { height: 24px; margin-bottom: 0; border-left: 1px solid #ccc; border-radius: 2px 2px 0 0; background: #fff; font-weight: bold; color: #333; }
.helpers { display: flex; gap: 8px; margin-left: auto; padding: 0 4px 9px 0; }
.helpers button { gap: 6px; }

.ribbon { flex: none; display: flex; height: 101px; margin: 0 4px; border: 1px solid #ccc; }
.group { flex: none; display: flex; flex-direction: column; background: linear-gradient(#ccc, #ccc) right bottom / 1px 43px no-repeat; padding-right: 1px; }
.group.rest { flex: 1 1 0; background: none; padding: 0; }
.body { display: flex; justify-content: space-evenly; height: 77px; padding-top: 4px; }
.big { flex-direction: column; min-width: 32px; height: 72px; padding-top: 2px; }
.big .ic32 { margin-bottom: 10px; }
.line { line-height: 12px; white-space: nowrap; }
.line .tri { margin: 0 0 3px 8px; }
.below { margin-top: 4px; }
.col { display: flex; flex-direction: column; }
.small { gap: 4px; height: 24px; white-space: nowrap; }
.small .tri { margin-left: 5px; }
.small:disabled { color: #999; }
.sep { width: 1px; height: 27px; margin-top: 25px; background: #ccc; }
.grouptitle { justify-content: center; gap: 5px; height: 22px; border-top: 1px solid #ccc; white-space: nowrap; }

.quick { flex: none; display: flex; align-items: center; gap: 8px; height: 24px; padding-left: 12px; }
.quick button { gap: 6px; }
.quick .customize { height: 24px; border-left: 1px solid #ccc; padding-left: 8px; margin-left: -3px; }
.tri.dark { border-top: 5px solid #333; position: relative; }
.tri.dark::before { content: ""; position: absolute; left: -4px; top: -8px; width: 8px; height: 1px; background: #333; }

.work { flex: 1; display: flex; min-height: 0; }
.side { flex: none; display: flex; flex-direction: column; width: 288px; padding: 13px 1px 11px 4px; }
.sidetabs { display: flex; height: 30px; margin-bottom: -1px; }
.sidetabs button { justify-content: center; width: 30px; border: 1px solid #ccc; border-left-width: 0; border-top-left-radius: 2px; }
.sidetabs .on { border-left-width: 1px; border-bottom-color: #fff; }
.panel { flex: 1; border: 1px solid #ccc; border-right: 3px solid #ccc; border-bottom-width: 2px; }
.panelhead { display: flex; align-items: center; height: 29px; gap: 10px; padding: 0 5px 0 20px; }
.panelhead h2 { flex: 1; margin: 0; font-size: 12px; }
.panelhead button { gap: 6px; }
.search { display: flex; align-items: center; gap: 9px; height: 28px; padding: 0 6px 5px 4px; border-bottom: 1px solid #ccc; }
.search > .tri { margin-left: -4px; }
.field { flex: 1; min-width: 0; display: flex; height: 22px; border: 1px solid #ccc; }
.field input { flex: 1; min-width: 0; border: 0; outline: 0; font: inherit; }
.field button { padding: 0 4px; color: #999; }
.tree { margin: 0; padding: 6px 0; list-style: none; }
.tree li { display: flex; align-items: center; gap: 4px; height: 24px; padding-left: 16px; }
.tree .root { padding-left: 10px; gap: 3px; }
.twist { width: 9px; }
.twist i { display: block; width: 0; border: 4px solid transparent; border-left: 7px solid #999; border-right: 0; }

.view { flex: 1; min-width: 0; margin-right: 4px; position: relative; background: linear-gradient(#999 241px, #c99 241px 272px, #cc9 272px 399px, #ccc 399px); }
.scene { position: absolute; inset: 0; width: 100%; height: 100%; }
.names text { fill: #963; font: 19px "Noto Sans", sans-serif; }
.viewtools { position: absolute; top: 7px; left: 532px; display: flex; width: 284px; height: 28px; padding: 0 4px; border: 1px solid #ccc; background: #fff; }
.viewtools button { flex: 1; position: relative; justify-content: center; border-left: 1px solid #ccc; }
.viewtools button:last-child { border-right: 1px solid #ccc; }
.viewtools .pressed { background: #ddd; box-shadow: inset 0 2px #fff, inset 0 3px #999, inset 1px 0 #fff, inset -1px -1px #fff; }
.viewtools .more::after { content: ""; position: absolute; right: 1px; bottom: 3px; border: 2px solid #333; border-top-color: transparent; border-left-color: transparent; }

.status { flex: none; display: flex; align-items: flex-start; height: 28px; border-top: 2px solid #999; overflow: hidden; padding-left: 6px; }
.sq { flex: none; justify-content: center; width: 22px; height: 22px; margin: 10px 4px 0 0; border: 1px solid #ccc; }
.sq.pressed { border-top: 2px solid #999; background: #eee; }
.status p { flex: 1; display: flex; align-items: center; gap: 2px; margin: 8px 0 0 5px; height: 18px; padding: 0 0 2px 4px; white-space: nowrap; box-shadow: -1px 0 #ccc; font-size: 11px; line-height: 12px; }
.cell { flex: none; display: flex; height: 24px; margin-top: 2px; border-left: 1px solid #ccc; }
.blank { width: 30px; }
.lights { width: 36px; padding-left: 6px; align-items: center; gap: 1px; }
.lights b { width: 11px; height: 11px; border-radius: 50%; background: #3c3; margin-top: 6px; }
.lights i { width: 6px; height: 6px; border-radius: 50%; background: #ccc; margin-top: 6px; }
.flag { width: 41px; padding: 6px 0 0 5px; }
.btn { width: 46px; padding-left: 3px; }
.btn button { width: 40px; height: 32px; margin-top: 2px; padding-top: 5px; align-items: flex-start; justify-content: center; border: 1px solid #ccc; border-radius: 3px; }
.picker { flex: none; position: relative; width: 179px; height: 24px; margin: 8px 17px 0 94px; border: 1px solid #ccc; background: linear-gradient(#ccc, #ccc) right 14px top / 1px 24px no-repeat; }
.picker select { appearance: none; width: 100%; height: 18px; padding: 0 6px; border: 0; background: none; color: #333; font: inherit; }
.picker .tri { position: absolute; right: 3px; top: 7px; }
</style>
